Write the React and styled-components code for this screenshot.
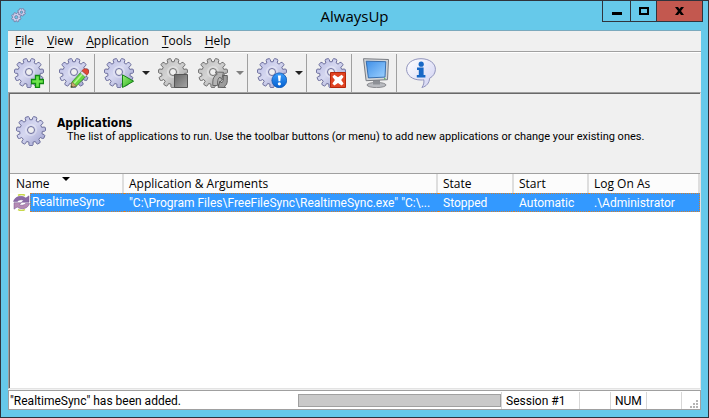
import React from 'react';
import styled, { createGlobalStyle } from 'styled-components';

const GlobalStyle = createGlobalStyle`
  * {
    box-sizing: border-box;
  }
  body {
    margin: 0;
    font-family: "Open Sans", "Noto Sans", sans-serif;
    font-size: 12px;
    line-height: 16px;
    color: #000;
  }
  button {
    font: inherit;
    color: inherit;
    border: 0;
    padding: 0;
    background: none;
  }
`;

const Window = styled.div`
  display: flex;
  flex-direction: column;
  min-height: 100vh;
  padding: 0 7px 7px;
  border: 1px solid #2f333c;
  background: #66c9ea;
`;

const TitleBar = styled.header`
  display: grid;
  grid-template-columns: 1fr auto 1fr;
  height: 29px;
`;

const AppIcon = styled.span`
  display: flex;
  padding: 7px 3px;
`;

const Title = styled.h1`
  margin: 0;
  font-size: 15px;
  font-weight: normal;
  line-height: 30px;
`;

const WindowControls = styled.div`
  display: flex;
  justify-content: flex-end;
  height: 21px;
  margin-right: -2px;
`;

const ControlButton = styled.button`
  display: flex;
  align-items: center;
  justify-content: center;
  width: ${props => props.$width}px;
  border: solid #30343d;
  border-width: 0 1px 1px 0;
  background: ${props => props.$close ? '#c3584f' : 'transparent'};
  &:first-child {
    border-left-width: 1px;
  }
`;

const Client = styled.main`
  display: flex;
  flex: 1;
  flex-direction: column;
  border-top: 1px solid #7ba9bd;
  background: #f0f0f0;
`;

const MenuBar = styled.nav`
  display: flex;
  height: 20px;
`;

const MenuItem = styled.button`
  padding: 0 6px 0 7px;
  u {
    text-underline-offset: 2px;
  }
`;

const Toolbar = styled.div`
  display: flex;
  height: 41px;
  border-top: 1px solid #a0a0a0;
  box-shadow: inset 0 1px #fff;
  padding-top: 2px;
`;

const ToolGroup = styled.div`
  display: flex;
  align-items: center;
  padding-left: 4px;
  border-right: 1px solid #a0a0a0;
  &:first-child {
    padding-left: 1px;
  }
  &:last-child {
    border-right: 0;
  }
`;

const ToolButton = styled.button`
  display: flex;
  padding: 0 5px;
`;

const DropButton = styled.button`
  display: flex;
  align-items: center;
  justify-content: center;
  width: 14px;
  height: 30px;
`;

const Workspace = styled.section`
  display: flex;
  flex: 1;
  flex-direction: column;
  border: 1px solid #e3e3e3;
  border-top-color: #a0a0a0;
  border-left-color: #a0a0a0;
  box-shadow: inset 1px 1px #696969;
  padding: 1px 0 0 1px;
  background: #fff;
`;

const Intro = styled.div`
  display: flex;
  align-items: flex-start;
  gap: 11px;
  height: 80px;
  padding: 22px 6px 0;
  border-bottom: 1px solid #a0a0a0;
  background: #f0f0f0;
`;

const IntroTitle = styled.h2`
  margin: 0;
  font-family: "DejaVu Sans Condensed", "DejaVu Sans", sans-serif;
  font-size: 12px;
  line-height: 14px;
`;

const IntroText = styled.p`
  margin: 0 0 0 10px;
  font-family: Roboto, sans-serif;
  font-size: 11px;
  line-height: 14px;
`;

const List = styled.table`
  width: 100%;
  table-layout: fixed;
  border-collapse: separate;
  border-spacing: 0;
`;

const HeadCell = styled.th`
  position: relative;
  height: 19px;
  padding: 0 0 0 5px;
  border-right: 2px solid #dedede;
  background: #fcfcfc;
  font-weight: normal;
  text-align: left;
  &:first-child {
    padding-left: 6px;
  }
`;

const SortMark = styled.svg`
  position: absolute;
  top: 3px;
  left: 50%;
  margin-left: -4px;
`;

const Row = styled.tr`
  background: #3399ff;
  color: #fff;
  font-family: Roboto, sans-serif;
`;

const Cell = styled.td`
  height: 19px;
  padding: 0 0 0 5px;
  border: 0 dotted #d08030;
  border-width: 1px 0;
  overflow: hidden;
  white-space: nowrap;
  text-overflow: ellipsis;
  &:last-child {
    border-right-width: 1px;
  }
`;

const NameCell = styled(Cell)`
  padding: 0;
  border: 0;
`;

const NameBox = styled.div`
  display: flex;
  background: #fff;
`;

const NameText = styled.span`
  flex: 1;
  padding-left: 1px;
  border: 1px dotted #d08030;
  border-right: 0;
  background: #3399ff;
  line-height: 17px;
`;

const SyncCell = styled.span`
  display: flex;
  align-items: center;
  width: 20px;
  padding-left: 3px;
`;

const StatusBar = styled.footer`
  display: flex;
  height: 20px;
  margin-top: 1px;
  border: 1px solid #a0a0a0;
  background: #fff;
  font-family: Roboto, sans-serif;
`;

const StatusText = styled.output`
  flex: 1;
  padding-left: 1px;
  line-height: 20px;
`;

const Progress = styled.div`
  width: 203px;
  height: 13px;
  margin: 3px 0;
  border: 1px solid #a0a0a0;
  background: #c9c9c9;
`;

const StatusPane = styled.span`
  width: ${props => props.$width}px;
  height: 17px;
  margin-top: 1px;
  padding-left: 4px;
  border-left: 1px solid #d7d7d7;
  line-height: 18px;
`;

const Grip = styled.svg`
  align-self: flex-end;
  margin: 0 2px 1px 4px;
`;

function gearPath(cx, cy, r, teeth) {
    const points = [];
    const step = (Math.PI * 2) / teeth;
    const inner = r * 0.77;
    for (let i = 0; i < teeth; i++) {
        const a = i * step + step / 2 - Math.PI / 2;
        [[-0.32, inner], [-0.27, r * 0.93], [-0.17, r], [0.17, r], [0.27, r * 0.93], [0.32, inner]].forEach(([t, d]) => {
            points.push(`${(cx + Math.cos(a + t * step) * d).toFixed(2)} ${(cy + Math.sin(a + t * step) * d).toFixed(2)}`);
        });
    }
    return `M${points.join('L')}Z`;
}

function hole(cx, cy, r) {
    return `M${cx - r} ${cy}a${r} ${r} 0 1 0 ${r * 2} 0a${r} ${r} 0 1 0 ${-r * 2} 0Z`;
}

const shape = gearPath(15, 15, 14.7, 11) + hole(15, 14, 3.5);

function Gear({ gray, children }) {
    return (
        <svg width="30" height="30" viewBox="0 0 30 30" aria-hidden="true">
            <path d={shape} fillRule="evenodd" strokeLinejoin="round"
                fill={gray ? 'url(#grayMetal)' : 'url(#blueMetal)'}
                stroke={gray ? '#6f6f6f' : '#6c6e9c'} />
            <circle cx="15" cy="14" r="5.3" fill="none" stroke="#fff" strokeOpacity=".3" strokeWidth="1.5" />
            {children}
        </svg>
    );
}

function Gradients() {
    return (
        <svg width="0" height="0" style={{ position: 'absolute' }} aria-hidden="true">
            <defs>
                <linearGradient id="blueMetal" x1="0" y1="0" x2="1" y2="1">
                    <stop offset="0" stopColor="#b7b9e2" />
                    <stop offset=".45" stopColor="#d6d8f0" />
                    <stop offset="1" stopColor="#989aca" />
                </linearGradient>
                <linearGradient id="grayMetal" x1="0" y1="0" x2="1" y2="1">
                    <stop offset="0" stopColor="#b8b8b8" />
                    <stop offset=".45" stopColor="#d4d4d4" />
                    <stop offset="1" stopColor="#969696" />
                </linearGradient>
                <linearGradient id="green" x1="0" y1="0" x2="1" y2="1">
                    <stop offset="0" stopColor="#9cf07c" />
                    <stop offset="1" stopColor="#25ad18" />
                </linearGradient>
                <linearGradient id="stopFill" x1="0" y1="0" x2="1" y2="1">
                    <stop offset="0" stopColor="#666" />
                    <stop offset="1" stopColor="#a5a5a5" />
                </linearGradient>
                <linearGradient id="screen" x1="0" y1="0" x2="1" y2="1">
                    <stop offset="0" stopColor="#3f8fe8" />
                    <stop offset="1" stopColor="#9ed2ff" />
                </linearGradient>
                <linearGradient id="bubble" x1="0" y1="0" x2="1" y2="1">
                    <stop offset="0" stopColor="#fff" />
                    <stop offset="1" stopColor="#cfd0f2" />
                </linearGradient>
                <linearGradient id="badge" x1="0" y1="0" x2="0" y2="1">
                    <stop offset="0" stopColor="#3a9dfa" />
                    <stop offset="1" stopColor="#0560d0" />
                </linearGradient>
            </defs>
        </svg>
    );
}

function AddIcon() {
    return (
        <Gear>
            <path d="M21.5 17.5h4v4h4v4h-4v4h-4v-4h-4v-4h4z" fill="#6ee64c" stroke="#118a12" strokeWidth="1.3" />
        </Gear>
    );
}

function EditIcon() {
    return (
        <Gear>
            <path d="M12 29.4l1-5.4L22.5 13.5l5 4.2L17.5 28z" fill="#68d83f" stroke="#34862a" strokeWidth=".8" />
            <path d="M15 25.5L24.3 15" stroke="#b2f78c" strokeWidth="1.6" />
            <path d="M12 29.4l1-5.4 4.5 4z" fill="#c9a873" stroke="#77603e" strokeWidth=".6" />
            <path d="M12 29.4l.4-2 1.5 1.2z" fill="#333" />
            <path d="M21.3 14.8l1.7-1.9 5 4.2-1.7 1.9z" fill="#e2e2e8" stroke="#858590" strokeWidth=".5" />
            <path d="M23 12.8c1.2-2.8 6.6-3 6.7.8 0 1.5-.6 2.4-1.7 3.4z" fill="#e14a35" stroke="#b0281c" strokeWidth=".6" />
        </Gear>
    );
}

function StartIcon() {
    return (
        <Gear>
            <path d="M18.5 16.8v12.7L29.6 23.2z" fill="url(#green)" stroke="#178018" strokeLinejoin="round" />
        </Gear>
    );
}

function StopIcon() {
    return (
        <Gear gray>
            <path d="M16.5 16.5h13v13h-13z" fill="url(#stopFill)" stroke="#555" />
        </Gear>
    );
}

function RestartIcon() {
    return (
        <Gear gray>
            <path d="M14.8 27.5v-3.5c0-4 1.8-6.5 4.5-7.8l-2-2.2 8.2.3-1.8 7-1.8-2.3c-1.6 1.3-2.3 3-2.3 5v3.5z" fill="#b4b4b4" stroke="#5f5f5f" strokeWidth=".9" />
            <path d="M29.3 17.5v5c0 3-1 4.8-2.8 5.7l1.2 1.4-7.7-.3 2-6.3 1.5 2c1.2-1 1.7-2.3 1.7-4v-3.5z" fill="#9c9c9c" stroke="#555" strokeWidth=".9" />
        </Gear>
    );
}

function AlertIcon() {
    return (
        <Gear>
            <circle cx="22.3" cy="22.3" r="7.4" fill="url(#badge)" stroke="#0a56b4" strokeWidth=".8" />
            <path d="M20.9 17.5h3l-.6 5.8h-1.8z" fill="#fff" />
            <circle cx="22.4" cy="25.8" r="1.6" fill="#fff" />
        </Gear>
    );
}

function RemoveIcon() {
    return (
        <Gear>
            <path d="M14.5 14.5h15v15h-15z" fill="#e04322" stroke="#b52609" />
            <path d="M18.3 16.8l3.7 2.5 3.7-2.5 1.9 2-2.4 3.2 2.4 3.4-1.9 2-3.7-2.5-3.7 2.5-1.9-2 2.5-3.4-2.5-3.2z" fill="#fff" />
        </Gear>
    );
}

function MonitorIcon() {
    return (
        <svg width="30" height="30" viewBox="0 0 30 30" aria-hidden="true">
            <ellipse cx="15.5" cy="27" rx="9.5" ry="2.6" fill="#b9bbc0" stroke="#77797e" strokeWidth=".8" />
            <path d="M12 22h7v4.5h-7z" fill="#8d9096" />
            <path d="M2.5.7l25 .8-1 20.2-21.4 1z" fill="#d3d5d8" stroke="#797c82" strokeLinejoin="round" />
            <path d="M5.2 3.2l19.6.5-.8 15.4-16.6.8z" fill="url(#screen)" stroke="#2c65a8" strokeWidth=".9" />
            <circle cx="23.8" cy="20.7" r=".7" fill="#43b63c" />
        </svg>
    );
}

function InfoIcon() {
    return (
        <svg width="30" height="30" viewBox="0 0 30 30" aria-hidden="true">
            <path d="M15 .7C6.5.7.6 5.3.6 11.3S6.3 22 15 22c1 0 2 0 2.8-.2.5 3-.3 5.4-1.9 7.7 4.7-1.2 7.4-4.5 7.7-9.2 3.7-2 5.8-5.2 5.8-9C29.4 5.3 23.5.7 15 .7z" fill="url(#bubble)" stroke="#9194bd" />
            <circle cx="15.2" cy="6.2" r="2.6" fill="#1767c6" />
            <path d="M11 9.6h6.6v7.5h1.8v2.5h-8.6v-2.5h2v-5h-1.8z" fill="#1767c6" />
        </svg>
    );
}

function Caret({ color = '#222' }) {
    return (
        <svg width="8" height="4" viewBox="0 0 8 4" aria-hidden="true">
            <path d="M0 0h8L4 4z" fill={color} />
        </svg>
    );
}

function SyncIcon() {
    return (
        <svg width="17" height="17" viewBox="0 0 17 17" aria-hidden="true">
            <path d="M5 1.3Q8.5-.5 12 1.3M5 15.7Q8.5 17.5 12 15.7" fill="none" stroke="#c8d84a" strokeWidth="1.5" />
            <path d="M.5 7.5C2 2 9 .8 12.8 4L16 1.8V8.300H8.500l2.200-1.800C8.500 5 5.500 6 4.500 7.500z" fill="#8a6aa6" stroke="#765792" strokeWidth=".5" />
            <path d="M16.500 9.500c-1.500 5.500-8.500 6.700-12.300 3.500L1 15.200V8.700H8.500L6.300 10.500c2.200 1.500 5.200.5 6.200-1z" fill="#b58bb4" stroke="#765792" strokeWidth=".5" />
        </svg>
    );
}

const menus = ['File', 'View', 'Application', 'Tools', 'Help'];

function App() {
    return (
        <Window>
            <GlobalStyle />
            <Gradients />
            <TitleBar>
                <AppIcon>
                    <svg width="15" height="15" viewBox="0 0 15 15" aria-hidden="true">
                        <path d={gearPath(10.5, 4.2, 4, 8) + hole(10.5, 4.2, 1.2)} fillRule="evenodd" fill="#cfd0ee" stroke="#74769d" strokeWidth=".8" />
                        <path d={gearPath(5.3, 9.2, 4.8, 8) + hole(5.3, 9.2, 1.6)} fillRule="evenodd" fill="#cfd0ee" stroke="#74769d" strokeWidth=".8" />
                    </svg>
                </AppIcon>
                <Title>AlwaysUp</Title>
                <WindowControls>
                    <ControlButton $width={29} aria-label="Minimize">
                        <svg width="10" height="10"><path d="M0 6h10v3H0z" /></svg>
                    </ControlButton>
                    <ControlButton $width={26} aria-label="Maximize">
                        <svg width="10" height="8"><path d="M1 1h8v6H1z" fill="none" stroke="#000" strokeWidth="2" /></svg>
                    </ControlButton>
                    <ControlButton $width={46} $close aria-label="Close">
                        <svg width="9" height="8"><path d="M0 0h3l1.5 2L6 0h3L6 4l3 4H6L4.5 6 3 8H0l3-4z" /></svg>
                    </ControlButton>
                </WindowControls>
            </TitleBar>
            <Client>
                <MenuBar>
                    {menus.map(name => (
                        <MenuItem key={name}><u>{name[0]}</u>{name.slice(1)}</MenuItem>
                    ))}
                </MenuBar>
                <Toolbar>
                    <ToolGroup>
                        <ToolButton aria-label="Add"><AddIcon /></ToolButton>
                    </ToolGroup>
                    <ToolGroup>
                        <ToolButton aria-label="Edit"><EditIcon /></ToolButton>
                    </ToolGroup>
                    <ToolGroup>
                        <ToolButton aria-label="Start"><StartIcon /></ToolButton>
                        <DropButton aria-label="Start options"><Caret /></DropButton>
                        <ToolButton aria-label="Stop" disabled><StopIcon /></ToolButton>
                        <ToolButton aria-label="Restart" disabled><RestartIcon /></ToolButton>
                        <DropButton aria-label="Restart options" disabled><Caret color="#808080" /></DropButton>
                    </ToolGroup>
                    <ToolGroup>
                        <ToolButton aria-label="Events"><AlertIcon /></ToolButton>
                        <DropButton aria-label="Event options"><Caret /></DropButton>
                    </ToolGroup>
                    <ToolGroup>
                        <ToolButton aria-label="Remove"><RemoveIcon /></ToolButton>
                    </ToolGroup>
                    <ToolGroup>
                        <ToolButton aria-label="Session"><MonitorIcon /></ToolButton>
                    </ToolGroup>
                    <ToolGroup>
                        <ToolButton aria-label="About"><InfoIcon /></ToolButton>
                    </ToolGroup>
                </Toolbar>
                <Workspace>
                    <Intro>
                        <Gear />
                        <div>
                            <IntroTitle>Applications</IntroTitle>
                            <IntroText>The list of applications to run. Use the toolbar buttons (or menu) to add new applications or change your existing ones.</IntroText>
                        </div>
                    </Intro>
                    <List>
                        <colgroup>
                            <col width="114" />
                            <col />
                            <col width="76" />
                            <col width="75" />
                            <col width="111" />
                        </colgroup>
                        <thead>
                            <tr>
                                <HeadCell>
                                    Name
                                    <SortMark width="8" height="4"><path d="M0 0h8L4 4z" /></SortMark>
                                </HeadCell>
                                <HeadCell>Application &amp; Arguments</HeadCell>
                                <HeadCell>State</HeadCell>
                                <HeadCell>Start</HeadCell>
                                <HeadCell>Log On As</HeadCell>
                            </tr>
                        </thead>
                        <tbody>
                            <Row>
                                <NameCell>
                                    <NameBox>
                                        <SyncCell><SyncIcon /></SyncCell>
                                        <NameText>RealtimeSync</NameText>
                                    </NameBox>
                                </NameCell>
                                <Cell>"C:\Program Files\FreeFileSync\RealtimeSync.exe" "C:\...</Cell>
                                <Cell>Stopped</Cell>
                                <Cell>Automatic</Cell>
                                <Cell>.\Administrator</Cell>
                            </Row>
                        </tbody>
                    </List>
                </Workspace>
                <StatusBar>
                    <StatusText>"RealtimeSync" has been added.</StatusText>
                    <Progress role="progressbar" aria-label="Progress" />
                    <StatusPane $width={78}>Session #1</StatusPane>
                    <StatusPane $width={31} />
                    <StatusPane $width={36}>NUM</StatusPane>
                    <StatusPane $width={35} />
                    <StatusPane $width={5} />
                    <Grip width="8" height="8" fill="#b5b5b5" aria-hidden="true">
                        <path d="M6 0h2v2H6zM3 3h2v2H3zM6 3h2v2H6zM0 6h2v2H0zM3 6h2v2H3zM6 6h2v2H6z" />
                    </Grip>
                </StatusBar>
            </Client>
        </Window>
    );
}

export default App;
